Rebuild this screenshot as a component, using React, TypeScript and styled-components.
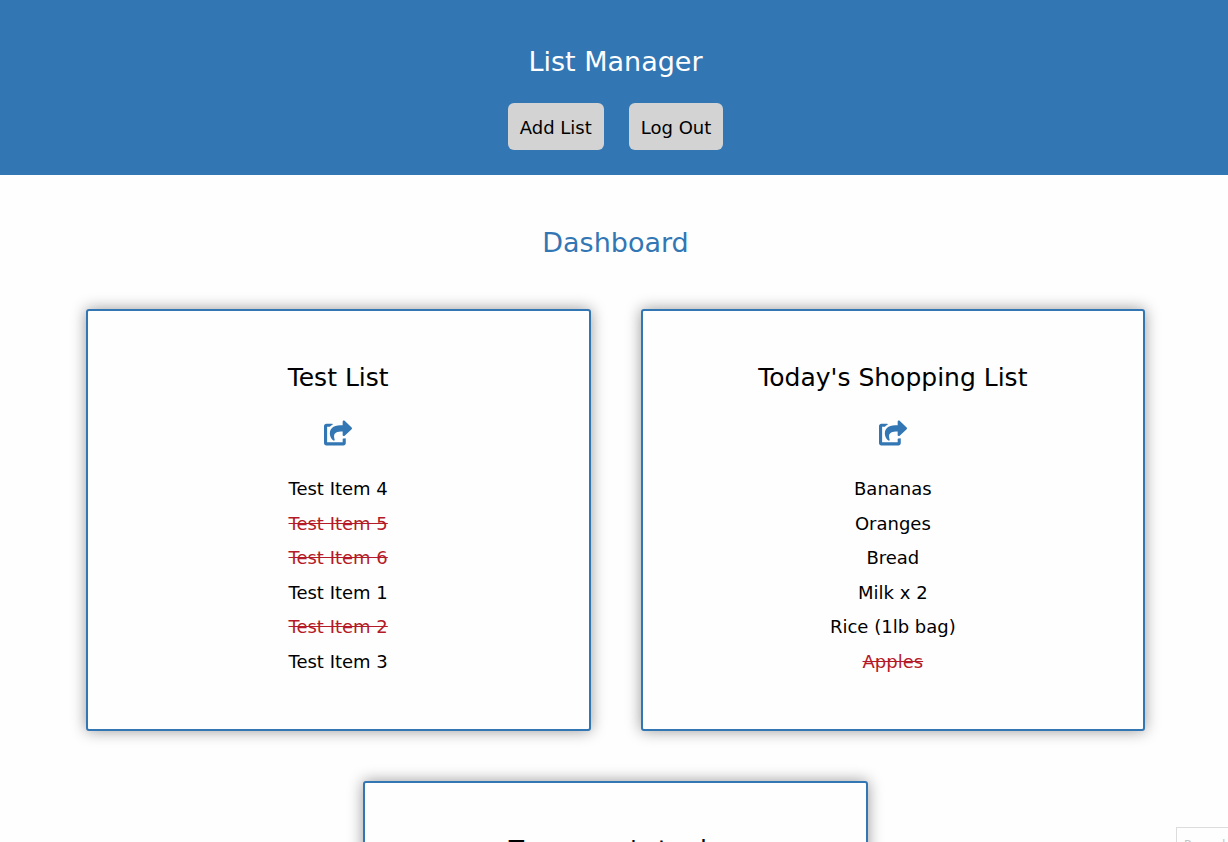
import React from "react";
import styled, { createGlobalStyle } from "styled-components";
import { FaShareSquare } from "react-icons/fa";

const BLUE = "#3276b4";

const GlobalStyle = createGlobalStyle`
  * { box-sizing: border-box; }
  html { overflow: hidden; height: 100%; }
  body {
    margin: 0;
    background: #fefefe;
    color: #000;
    font-family: "DejaVu Sans", sans-serif;
    font-size: 18px;
    height: 100%;
    overflow: hidden;
  }
`;

const Header = styled.header`
  display: flex;
  flex-direction: column;
  align-items: center;
  gap: 24px;
  padding: 44px 0 25px 3px;
  background: ${BLUE};
`;

const SiteTitle = styled.h1`
  margin: 0;
  color: #fff;
  font-size: 27px;
  font-weight: 400;
  line-height: 35px;
`;

const Actions = styled.nav`
  display: flex;
  gap: 25px;
`;

const ActionButton = styled.button`
  padding: 13px 12px 11px;
  border: 0;
  border-radius: 6px;
  background: #d3d3d3;
  color: #000;
  font: inherit;
  line-height: 23px;
`;

const Main = styled.main`
  padding: 50px 0 50px 3px;
`;

const PageTitle = styled.h2`
  margin: 0;
  color: ${BLUE};
  font-size: 27px;
  font-weight: 400;
  line-height: 35px;
  text-align: center;
`;

const Cards = styled.div`
  display: flex;
  flex-wrap: wrap;
  justify-content: center;
  gap: 50px;
  margin-top: 49px;
`;

const Card = styled.article`
  display: flex;
  flex-direction: column;
  align-items: center;
  width: 41.2%;
  padding: 50px 48px;
  border: 2px solid ${BLUE};
  border-radius: 3px;
  background: #fefefe;
  box-shadow: 0 0 15px rgba(0, 0, 0, 0.4);
`;

const CardTitle = styled.h3`
  margin: 0;
  font-size: 25px;
  font-weight: 400;
  line-height: 34px;
`;

const ShareButton = styled.button`
  display: flex;
  margin: 24px 0 25px;
  padding: 0;
  border: 0;
  background: none;
  color: ${BLUE};
  font-size: 28px;
`;

const Items = styled.ul`
  display: grid;
  grid-auto-rows: 1fr;
  min-height: 207px;
  margin: 0;
  padding: 0;
  list-style: none;
  text-align: center;
`;

const Item = styled.li<{ $done?: boolean }>`
  color: ${(p) => (p.$done ? "#b51a28" : "#000")};
  text-decoration: ${(p) => (p.$done ? "line-through" : "none")};
  line-height: 34px;
`;

const Badge = styled.aside`
  position: fixed;
  right: -60px;
  bottom: -10px;
  width: 112px;
  height: 25px;
  padding: 9px 7px;
  border: 1px solid #dcdcdc;
  background: #fefefe;
  color: #c4c4c4;
  font-size: 12px;
  line-height: 16px;
  white-space: nowrap;
`;

type Entry = { text: string; done?: boolean };

const lists: { title: string; items: Entry[] }[] = [
  {
    title: "Test List",
    items: [
      { text: "Test Item 4" },
      { text: "Test Item 5", done: true },
      { text: "Test Item 6", done: true },
      { text: "Test Item 1" },
      { text: "Test Item 2", done: true },
      { text: "Test Item 3" },
    ],
  },
  {
    title: "Today's Shopping List",
    items: [
      { text: "Bananas" },
      { text: "Oranges" },
      { text: "Bread" },
      { text: "Milk x 2" },
      { text: "Rice (1lb bag)" },
      { text: "Apples", done: true },
    ],
  },
  { title: "Tomorrow's to do", items: [] },
];

export default function App() {
  return (
    <>
      <GlobalStyle />
      <Header>
        <SiteTitle>List Manager</SiteTitle>
        <Actions>
          <ActionButton type="button">Add List</ActionButton>
          <ActionButton type="button">Log Out</ActionButton>
        </Actions>
      </Header>
      <Main>
        <PageTitle>Dashboard</PageTitle>
        <Cards>
          {lists.map((list) => (
            <Card key={list.title}>
              <CardTitle>{list.title}</CardTitle>
              <ShareButton type="button" aria-label={"Share " + list.title}>
                <FaShareSquare />
              </ShareButton>
              <Items>
                {list.items.map((item) => (
                  <Item key={item.text} $done={item.done}>
                    {item.text}
                  </Item>
                ))}
              </Items>
            </Card>
          ))}
        </Cards>
      </Main>
      <Badge>Record</Badge>
    </>
  );
}
